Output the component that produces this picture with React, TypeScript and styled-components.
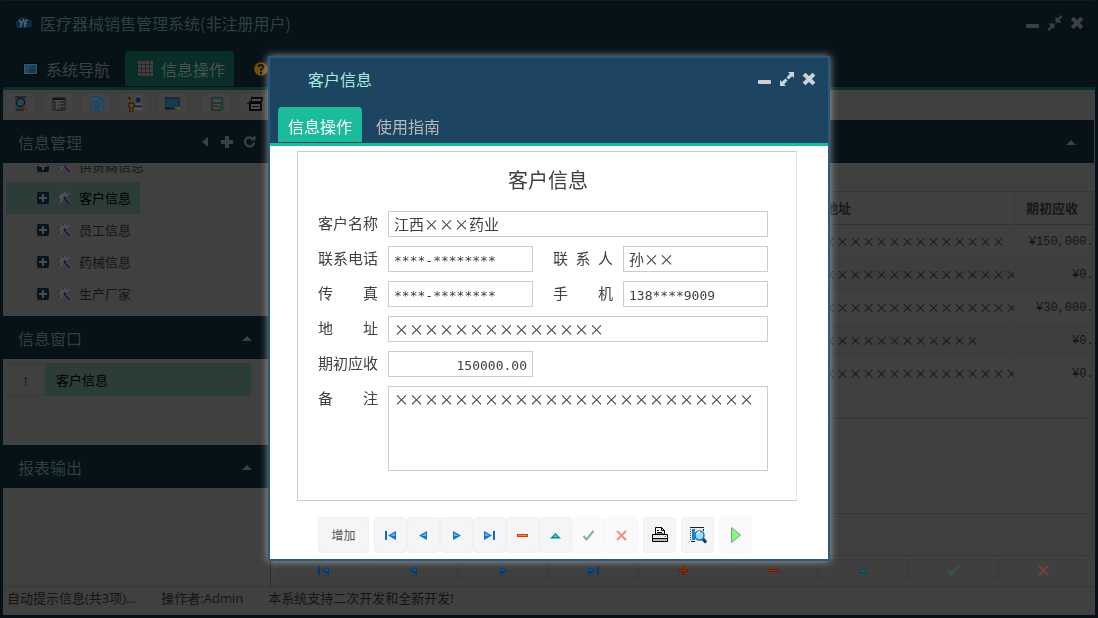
import React from "react";
import styled, { createGlobalStyle, css } from "styled-components";

const SANS = `"Open Sans", "Noto Sans CJK SC", sans-serif`;
const CJK = `"Noto Sans CJK SC", sans-serif`;
const MONO = `"DejaVu Sans Mono", "Noto Sans CJK SC", monospace`;
const MONO_SMALL = `"Liberation Mono", "Noto Sans CJK SC", monospace`;

const Global = createGlobalStyle`
  * { box-sizing: border-box; }
  body { margin: 0; background: #404040; font-family: ${SANS}; }
  button, input, textarea { font: inherit; margin: 0; }
  button { border: 0; background: none; padding: 0; color: inherit; }
  h1, h2, h3, ul { margin: 0; padding: 0; font-weight: 400; list-style: none; }
  svg { display: block; flex: none; }
`;

/* ---------- icons ---------- */

type Kind = "first" | "prev" | "next" | "last" | "plus" | "minus" | "up" | "check" | "cross";

const Pixel = styled.svg<{ $dim?: boolean }>`
  ${(p) => p.$dim && css`filter: saturate(1.5) brightness(0.48);`}
`;

function NavIcon({ kind, dim }: { kind: Kind; dim?: boolean }) {
  const left = (x: number) => (
    <>
      <path d={`M${x + 8} 2v9L${x} 6.5z`} fill="#1470e0" />
      <path d={`M${x + 7} 4v3H${x + 2}z`} fill="#58b4ff" />
    </>
  );
  const right = (x: number) => (
    <>
      <path d={`M${x} 2v9l8-4.5z`} fill="#1470e0" />
      <path d={`M${x + 1} 4v3h5z`} fill="#58b4ff" />
    </>
  );
  return (
    <Pixel $dim={dim} width="13" height="13" viewBox="0 0 13 13" aria-hidden="true">
      {kind === "first" && <><path d="M1 2h2v9H1z" fill="#1266c8" />{left(4)}</>}
      {kind === "prev" && left(2)}
      {kind === "next" && right(3)}
      {kind === "last" && <>{right(1)}<path d="M10 2h2v9h-2z" fill="#1266c8" /></>}
      {kind === "plus" && <><path d="M5 2h3v3h3v3H8v3H5V8H2V5h3z" fill="#d83c08" /><path d="M6 3h1v3h3v1H3V6h3z" fill="#ff8428" /></>}
      {kind === "minus" && <><path d="M1 5h11v3H1z" fill="#d83c08" /><path d="M2 6h9v1H2z" fill="#ff8c28" /></>}
      {kind === "up" && <><path d="M1 9.500h11L6.500 4z" fill="#0a8c98" /><path d="M4 8h5L6.500 5.500z" fill="#30d0dc" /></>}
      {kind === "check" && <path d="M1.500 7l3 3.500L11.500 2" fill="none" stroke="#7db792" strokeWidth="2" />}
      {kind === "cross" && <path d="M2 2l9 9M11 2l-9 9" fill="none" stroke="#ec908a" strokeWidth="2" />}
    </Pixel>
  );
}

const Minus = () => (
  <svg width="14" height="14" viewBox="0 0 14 14" aria-hidden="true">
    <rect x="0" y="8" width="13" height="4" rx="1" fill="currentColor" />
  </svg>
);
const Expand = () => (
  <svg width="16" height="16" viewBox="0 0 16 16" fill="currentColor" aria-hidden="true">
    <path d="M9 1h6v6l-1.800-1.800-3.700 3.300L7.500 6.500l3.300-3.700zM7 15H1V9l1.800 1.800 3.700-3.300L8.500 9.500l-3.300 3.700z" />
  </svg>
);
const Compress = () => (
  <svg width="16" height="16" viewBox="0 0 16 16" fill="currentColor" aria-hidden="true">
    <path d="M8.500 7.500v-6l2 2L14 0l1.500 1.500L12.200 5l2.300 2.500zM7.500 8.500v6l-2-2L2 16 .5 14.500 3.800 11 1.500 8.500z" />
  </svg>
);
const Times = () => (
  <svg width="14" height="14" viewBox="0 0 14 14" aria-hidden="true">
    <path d="M3.500 3.500l7 7M10.500 3.500l-7 7" stroke="currentColor" strokeWidth="4" strokeLinecap="square" />
  </svg>
);
const CaretUp = () => (
  <svg width="12" height="12" viewBox="0 0 12 12" aria-hidden="true"><path d="M1 9l5-5 5 5z" fill="currentColor" /></svg>
);
const CaretLeft = () => (
  <svg width="12" height="12" viewBox="0 0 12 12" aria-hidden="true"><path d="M9 1v10L3 6z" fill="currentColor" /></svg>
);
const PlusSign = () => (
  <svg width="12" height="12" viewBox="0 0 12 12" aria-hidden="true"><path d="M4 0h4v4h4v4H8v4H4V8H0V4h4z" fill="currentColor" /></svg>
);
const Refresh = () => (
  <svg width="13" height="13" viewBox="0 0 13 13" aria-hidden="true">
    <path d="M9.600 3.600A4.500 4.500 0 1 0 11 7.500" fill="none" stroke="currentColor" strokeWidth="2.200" />
    <path d="M12.500 0v5.500H7z" fill="currentColor" />
  </svg>
);
const Cloud = () => (
  <svg width="16" height="14" viewBox="0 0 16 14" aria-hidden="true">
    <path d="M3 12a3.500 3.500 0 0 1-1-7A5 5 0 0 1 11 3a4.500 4.500 0 0 1 2 9z" fill="#0c2a40" />
    <path d="M3 4l2.500 3.500M8 3L4 11M9 11V6q0-2 3-1.500M8 7.500h3" fill="none" stroke="#59606a" strokeWidth="1.600" />
  </svg>
);
const Screen = () => (
  <svg width="15" height="12" viewBox="0 0 15 12" aria-hidden="true">
    <path d="M0 0h15v12H0z" fill="#02060a" /><path d="M1 1h13v10H1z" fill="#46535a" /><path d="M2 2h11v8H2z" fill="#123c5c" /><path d="M2 2h7L4 10H2z" fill="#1d4a6b" />
  </svg>
);
const GridIcon = () => (
  <svg width="15" height="15" viewBox="0 0 15 15" aria-hidden="true">
    <path d="M0 0h15v15H0z" fill="#453f40" />
    <path d="M3.500 0v15M7.500 0v15M11.500 0v15M0 3.500h15M0 7.500h15M0 11.500h15" stroke="#262a28" />
  </svg>
);
const Help = () => (
  <svg width="16" height="16" viewBox="0 0 16 16" aria-hidden="true">
    <circle cx="8" cy="8" r="7" fill="#6f5212" stroke="#2d2208" />
    <path d="M5.500 6Q5.500 4 8 4t2.500 2Q10.500 7 8 8.500V10" fill="none" stroke="#12100a" strokeWidth="2" />
    <path d="M7 11h2v2H7z" fill="#12100a" />
  </svg>
);
const PlusBox = () => (
  <svg width="12" height="12" viewBox="0 0 12 12" aria-hidden="true">
    <rect width="12" height="12" rx="2" fill="#07141d" /><path d="M6 2v8M2 6h8" stroke="#484d50" strokeWidth="2" />
  </svg>
);
const Tool = () => (
  <svg width="14" height="14" viewBox="0 0 14 14" aria-hidden="true">
    <path d="M1 6l4-4 3-2 1 3 4-1-2 3-3 1-4 6-2-1 2-3z" fill="#505050" />
    <path d="M0 5l2 2M1 10l2-1M6 1l1 2M2 3l1 1" stroke="#2c2c2c" />
    <path d="M7 6l6 6.500" stroke="#2b0b3c" strokeWidth="2" /><path d="M9 7l5 5" stroke="#665a6c" />
  </svg>
);

function ToolbarIcon({ n }: { n: number }) {
  return (
    <svg width="16" height="16" viewBox="0 0 16 16" aria-hidden="true">
      {n === 0 && <><path d="M2 1h11v13H2z" fill="#343c42" /><path d="M2 1h11M3 14h8" stroke="#111" /><circle cx="7.500" cy="6.500" r="4" fill="#28485a" stroke="#101a20" strokeWidth="1.500" /><path d="M10 10l4 4" stroke="#632817" strokeWidth="3" /></>}
      {n === 1 && <><path d="M2 2h12v12H2z" fill="#4a4a4a" stroke="#161616" /><path d="M2 3h12" stroke="#161616" strokeWidth="2" /><path d="M4 5v8" stroke="#203443" strokeWidth="2" /><path d="M7 6h1M7 9h1M7 12h1M9 6h4M9 9h4M9 12h4" stroke="#111" /></>}
      {n === 2 && <><path d="M3 1h8l3 3v11H3z" fill="#2d5068" stroke="#19405c" /><path d="M11 1v3h3M5 5h5M5 7h7M5 9h7M5 11h7M5 13h5" fill="none" stroke="#1a3a50" /></>}
      {n === 3 && <><circle cx="4" cy="4" r="2" fill="#644516" /><path d="M2 7h5v4H6v5H3v-5H2z" fill="#644516" stroke="#1c1406" /><path d="M8 1h6v6H8z" fill="#101d48" stroke="#565656" /><path d="M8 8h7v2H8zM7 12h8v2H7z" fill="#555" /><path d="M1 2h2v2M7 10h8" fill="none" stroke="#111" /></>}
      {n === 4 && <><path d="M0 2h14v10H0z" fill="#163c50" stroke="#11151a" /><path d="M0 13h9" stroke="#111" /><circle cx="12" cy="11" r="3.500" fill="#1b2866" /><path d="M12 7.500v7a3.500 3.500 0 0 1-3-3z" fill="#1d5133" /><path d="M12 11h3.500a3.500 3.500 0 0 1-3.500 3.500z" fill="#6b5717" /></>}
      {n === 5 && <><path d="M3 2h10v12H3z" fill="#4b4b4b" stroke="#171717" /><path d="M3 3h10" stroke="#17435b" strokeWidth="2" /><path d="M4 7h8M4 10h5" stroke="#171717" /><path d="M12 8v6M9 11h6" stroke="#164d20" strokeWidth="2" /></>}
      {n === 6 && <><path d="M4 1h12v4H4z" fill="#080808" /><path d="M5 3h9v2H5z" fill="#4d4d4d" /><path d="M2 5h13v10H2z" fill="#080808" /><path d="M4 8h9v5H4z" fill="#4d4d4d" /><path d="M5 10.500h7M0 7.500h3" stroke="#111" /></>}
    </svg>
  );
}
const Printer = () => (
  <svg width="18" height="18" viewBox="0 0 18 18" aria-hidden="true">
    <path d="M4.500 8V1.500h6l3 3V8z" fill="#fff" stroke="#000" />
    <path d="M6 4.500h2M6 6.500h5M10.500 1v3.500h3" fill="none" stroke="#000" />
    <path d="M1.500 8.500h15v7h-15z" fill="#fff" stroke="#000" />
    <path d="M2 9.500h14M3 10.500h12" stroke="#d8c4c8" strokeDasharray="1 1" />
    <path d="M1.500 12.500h15v3h-15z" fill="#b8b8c0" stroke="#000" /><path d="M14 10.500h1" stroke="#d02030" />
  </svg>
);
const Preview = () => (
  <svg width="18" height="18" viewBox="0 0 18 18" aria-hidden="true">
    <path d="M1 1h14v14H1z" fill="#e8e8e8" /><path d="M1 1.500h14M2 15.500h4M14.500 3v2" stroke="#222" />
    <path d="M3 3h3v11H3z" fill="#1682d8" /><path d="M1.500 3v11" stroke="#555" strokeDasharray="1 1" />
    <circle cx="10.500" cy="9.500" r="4.500" fill="#9adcff" stroke="#1878c0" strokeWidth="1.500" />
    <path d="M8 8q1-2 3-2" stroke="#fff" strokeWidth="2" fill="none" /><path d="M14 13l3 3.500" stroke="#173858" strokeWidth="3" />
  </svg>
);
const Play = () => (
  <svg width="12" height="18" viewBox="0 0 12 18" aria-hidden="true">
    <path d="M1.500 1.500v15L10.500 9z" fill="#7cff7c" stroke="#8a948a" />
  </svg>
);

/* ---------- main window ---------- */

const Shell = styled.div`
  min-height: 100vh;
  display: flex;
  flex-direction: column;
  background: #404040;
  border: solid #071118;
  border-width: 0 3px 3px;
  color: #151515;
  font-size: 13px;
`;
const Banner = styled.header`
  background: #071118;
  border-top: 1px solid #0e1c25;
  border-bottom: 3px solid #092f28;
`;
const TitleBar = styled.div`
  height: 50px;
  padding: 0 11px 6px 13px;
  display: flex;
  align-items: center;
  gap: 8px;
`;
const AppTitle = styled.h1`
  flex: 1;
  font: 16px/24px ${CJK};
  color: #2b413e;
`;
const WindowButtons = styled.div<{ $bright?: boolean }>`
  display: flex;
  align-items: center;
  gap: 7px;
  color: ${(p) => (p.$bright ? "#cbd3d9" : "#3b4043")};
`;
const TopTabs = styled.nav`
  height: 36px;
  display: flex;
  padding-left: 7px;
`;
const TopTab = styled.button<{ $active?: boolean }>`
  display: flex;
  align-items: center;
  gap: 8px;
  padding: 0 9px 0 13px;
  height: 35px;
  margin-right: 6px;
  border-radius: 4px 4px 0 0;
  font: 16px/24px ${CJK};
  color: ${(p) => (p.$active ? "#47534f" : "#3a4247")};
  background: ${(p) => (p.$active ? "#082e27" : "transparent")};
`;
const Toolbar = styled.div`
  height: 30px;
  display: flex;
  align-items: center;
  gap: 13px;
  padding: 0 2px 3px;
`;
const ToolGroup = styled.div`
  display: flex;
  gap: 7px;
`;
const ToolButton = styled.button`
  width: 31px;
  height: 24px;
  display: grid;
  place-items: center;
  border: 1px solid #3d3d3d;
  border-radius: 4px;
  background: #424242;
`;
const Workspace = styled.div`
  flex: 1;
  display: grid;
  grid-template-columns: 267px minmax(0, 1fr);
`;
const Sidebar = styled.aside`
  display: flex;
  flex-direction: column;
`;
const PanelHead = styled.div`
  height: 43px;
  display: flex;
  align-items: center;
  gap: 10px;
  padding: 0 14px 0 15px;
  background: #071118;
  color: #3b4043;
`;
const FoldButton = styled.button`
  margin-right: 3px;
`;
const PanelTitle = styled.h2`
  flex: 1;
  font: 16px/24px ${CJK};
  color: #2b413e;
`;
const Tree = styled.ul`
  height: 153px;
  overflow: hidden;
  display: flex;
  flex-direction: column;
  justify-content: flex-end;
  border-top: 3px solid #404040;
  padding: 0 3px 6px;
`;
const TreeItem = styled.li<{ $active?: boolean }>`
  flex: none;
  height: 32px;
  width: 134px;
  white-space: nowrap;
  display: flex;
  align-items: center;
  gap: 8px;
  padding-left: 31px;
  font-family: ${CJK};
  background: ${(p) => (p.$active ? "#2c3c38" : "transparent")};
  color: ${(p) => (p.$active ? "#000" : "#151515")};
`;
const TreeLabel = styled.span`
  line-height: 20px;
`;
const OpenWindows = styled.ul`
  height: 86px;
  padding: 4px 19px 0 3px;
`;
const OpenWindow = styled.li`
  display: flex;
  height: 33px;
  align-items: stretch;
  line-height: 34px;
  color: #000;
  font-family: ${CJK};
`;
const RowNumber = styled.span`
  width: 39px;
  text-align: center;
  color: #1e1e1e;
  border: solid #2f3d3a;
  border-width: 1px 0;
  font-family: ${SANS};
`;
const RowName = styled.span`
  flex: 1;
  padding-left: 11px;
  background: #2c3c38;
`;
const Main = styled.main`
  min-width: 0;
  display: flex;
  flex-direction: column;
  padding-right: 1px;
  border-left: 1px solid #2c2c2c;
`;
const GridArea = styled.div`
  flex: 1;
  margin-top: 28px;
  margin-right: 1px;
  overflow: hidden;
  border: solid #363636;
  border-width: 1px 1px 1px 0;
`;
const Table = styled.table`
  width: calc(100% + 17px);
  table-layout: fixed;
  border-collapse: collapse;
  font-family: ${CJK};
  font-size: 13px;
`;
const Th = styled.th<{ $w?: number; $left?: boolean }>`
  width: ${(p) => (p.$w ? `${p.$w}px` : "auto")};
  height: 32px;
  padding: 0 11px;
  text-align: ${(p) => (p.$left ? "left" : "center")};
  border-right: 1px solid #3a3a3a;
  border-bottom: 1px solid #333;
  color: #181818;
`;
const Td = styled.td<{ $num?: boolean }>`
  height: 33px;
  padding: ${(p) => (p.$num ? "2px 0 0" : "0 5px")};
  overflow: hidden;
  white-space: nowrap;
  border-right: 1px solid #3c3c3c;
  border-bottom: 1px solid #3c3c3c;
  text-align: ${(p) => (p.$num ? "right" : "left")};
  font-family: ${(p) => (p.$num ? MONO_SMALL : CJK)};
  font-size: ${(p) => (p.$num ? "12px" : "13px")};
`;
const Row = styled.tr`
  &:nth-child(even) { background: #3e3e3e; }
`;
const Detail = styled.div<{ $h: number }>`
  height: ${(p) => p.$h}px;
  margin-right: 1px;
  border-right: 1px solid #363636;
  border-bottom: 1px solid #373737;
`;
const RecordBar = styled.div`
  height: 30px;
  display: flex;
  padding: 3px 6px 5px 7px;
`;
const RecordButton = styled.button`
  flex: 1;
  display: grid;
  place-items: center;
  border: 1px solid #3c3c3c;
  border-radius: 4px;
  background: #3f3f3f;
`;
const Status = styled.footer`
  height: 29px;
  display: flex;
  align-items: center;
  gap: 25px;
  padding: 0 4px 6px;
  border-top: 1px solid #383838;
  line-height: 20px;
  color: #141414;
`;

/* ---------- customer dialog ---------- */

const Layer = styled.div`
  position: fixed;
  inset: 0;
  display: grid;
  place-items: center;
  padding-bottom: 1px;
`;
const Dialog = styled.section`
  width: 562px;
  max-width: 100%;
  background: #fff;
  border: 2px solid #285a80;
  box-shadow: 0 0 8px rgba(255, 255, 255, 0.55);
  color: #404040;
`;
const DialogTop = styled.header`
  background: #1d4461;
  border-bottom: 3px solid #1abc9c;
`;
const DialogTitleBar = styled.div`
  height: 49px;
  display: flex;
  align-items: center;
  padding: 0 12px 7px 38px;
`;
const DialogTitle = styled.h2`
  flex: 1;
  font: 16px/24px ${CJK};
  color: #a5ecdc;
`;
const DialogTabs = styled.div`
  display: flex;
  height: 36px;
  padding-left: 8px;
  gap: 4px;
`;
const DialogTab = styled.button<{ $active?: boolean }>`
  height: 35px;
  padding: 2px 10px 0;
  border-radius: 4px 4px 0 0;
  font: 16px/24px ${CJK};
  color: ${(p) => (p.$active ? "#fff" : "#b4b9be")};
  background: ${(p) => (p.$active ? "#1abc9c" : "transparent")};
`;
const Form = styled.form`
  margin: 5px 31px 0 27px;
  height: 350px;
  padding: 12px 28px 0 20px;
  border: solid #ccc;
  border-width: 1px;
  border-right-color: #e4e4e4;
  font: 15px/24px ${CJK};
`;
const FormTitle = styled.h3`
  height: 47px;
  padding-left: 10px;
  font-size: 20px;
  line-height: 32px;
  text-align: center;
`;
const FieldRow = styled.div`
  display: flex;
  align-items: flex-start;
  margin-bottom: 9px;
`;
const Label = styled.label<{ $second?: boolean }>`
  width: 60px;
  margin-left: ${(p) => (p.$second ? "20px" : "0")};
  margin-right: 10px;
  text-align: justify;
  text-align-last: justify;
`;
const box = css`
  min-width: 0;
  padding: 0 5px;
  border: 1px solid #ccc;
  border-radius: 0;
  background: #fff;
  color: #404040;
  outline: 0;
`;
const Field = styled.input<{ $wide?: boolean; $mono?: boolean; $right?: boolean }>`
  ${box}
  height: 26px;
  width: 145px;
  ${(p) => p.$wide && css`flex: 1;`}
  padding-top: ${(p) => (p.$mono ? "2px" : "0")};
  padding-bottom: ${(p) => (p.$mono ? "0" : "2px")};
  font-family: ${(p) => (p.$mono ? MONO : CJK)};
  font-size: ${(p) => (p.$mono ? "13px" : "15px")};
  text-align: ${(p) => (p.$right ? "right" : "left")};
`;
const Area = styled.textarea`
  ${box}
  flex: 1;
  height: 85px;
  resize: none;
  font-family: ${CJK};
`;
const Actions = styled.div`
  display: flex;
  gap: 5px;
  padding: 16px 0 6px 48px;
`;
const Group = styled.div`
  display: flex;
`;
const Action = styled.button<{ $text?: boolean; $off?: boolean }>`
  width: ${(p) => (p.$text ? "51px" : "33px")};
  height: 36px;
  display: grid;
  place-items: center;
  border: 1px solid ${(p) => (p.$off ? "#f7f7f7" : "#f0f0f0")};
  border-radius: 4px;
  background: ${(p) => (p.$off ? "#fafafa" : "#f5f5f5")};
  color: #555;
  font: 12px/20px ${CJK};
`;

const toolGroups = [["查询", "列表", "单据", "人员", "统计"], ["新增", "打印"]];
const tree = ["供货商信息", "客户信息", "员工信息", "药械信息", "生产厂家"];
const rows: [number, string][] = [
  [26, "¥150,000.00"],
  [28, "¥0.00"],
  [28, "¥30,000.00"],
  [24, "¥0.00"],
  [28, "¥0.00"],
];
const records: [Kind, string][] = [
  ["first", "首条"], ["prev", "上一条"], ["next", "下一条"], ["last", "末条"],
  ["plus", "插入"], ["minus", "删除"], ["up", "编辑"], ["check", "保存"], ["cross", "取消"],
];

function CustomerDialog() {
  return (
    <Layer>
      <Dialog role="dialog" aria-labelledby="dialog-title">
        <DialogTop>
          <DialogTitleBar>
            <DialogTitle id="dialog-title">客户信息</DialogTitle>
            <WindowButtons $bright>
              <button aria-label="最小化"><Minus /></button>
              <button aria-label="最大化"><Expand /></button>
              <button aria-label="关闭"><Times /></button>
            </WindowButtons>
          </DialogTitleBar>
          <DialogTabs>
            <DialogTab $active>信息操作</DialogTab>
            <DialogTab>使用指南</DialogTab>
          </DialogTabs>
        </DialogTop>
        <Form>
          <FormTitle>客户信息</FormTitle>
          <FieldRow>
            <Label htmlFor="name">客户名称</Label>
            <Field id="name" $wide defaultValue="江西×××药业" />
          </FieldRow>
          <FieldRow>
            <Label htmlFor="phone">联系电话</Label>
            <Field id="phone" $mono defaultValue="****-********" />
            <Label htmlFor="contact" $second>联 系 人</Label>
            <Field id="contact" defaultValue="孙××" />
          </FieldRow>
          <FieldRow>
            <Label htmlFor="fax">传 真</Label>
            <Field id="fax" $mono defaultValue="****-********" />
            <Label htmlFor="mobile" $second>手 机</Label>
            <Field id="mobile" $mono defaultValue="138****9009" />
          </FieldRow>
          <FieldRow>
            <Label htmlFor="address">地 址</Label>
            <Field id="address" $wide defaultValue={"×".repeat(14)} />
          </FieldRow>
          <FieldRow>
            <Label htmlFor="opening">期初应收</Label>
            <Field id="opening" $mono $right defaultValue="150000.00" />
          </FieldRow>
          <FieldRow>
            <Label htmlFor="remark">备 注</Label>
            <Area id="remark" defaultValue={"×".repeat(24)} />
          </FieldRow>
        </Form>
        <Actions>
          <Action $text>增加</Action>
          <Group>
            {records.filter(([k]) => k !== "plus").map(([k, name]) => (
              <Action key={k} aria-label={name} $off={k === "check" || k === "cross"}>
                <NavIcon kind={k} />
              </Action>
            ))}
          </Group>
          <Action aria-label="打印"><Printer /></Action>
          <Action aria-label="预览"><Preview /></Action>
          <Action aria-label="运行" $off><Play /></Action>
        </Actions>
      </Dialog>
    </Layer>
  );
}

export default function App() {
  return (
    <>
      <Global />
      <Shell>
        <Banner>
          <TitleBar>
            <Cloud />
            <AppTitle>医疗器械销售管理系统(非注册用户)</AppTitle>
            <WindowButtons>
              <button aria-label="最小化"><Minus /></button>
              <button aria-label="还原"><Compress /></button>
              <button aria-label="关闭"><Times /></button>
            </WindowButtons>
          </TitleBar>
          <TopTabs>
            <TopTab><Screen />系统导航</TopTab>
            <TopTab $active><GridIcon />信息操作</TopTab>
            <TopTab aria-label="帮助"><Help /></TopTab>
          </TopTabs>
        </Banner>
        <Toolbar>
          {toolGroups.map((group, g) => (
            <ToolGroup key={g}>
              {group.map((name, i) => (
                <ToolButton key={name} aria-label={name}><ToolbarIcon n={g * 5 + i} /></ToolButton>
              ))}
            </ToolGroup>
          ))}
        </Toolbar>
        <Workspace>
          <Sidebar>
            <PanelHead>
              <PanelTitle>信息管理</PanelTitle>
              <button aria-label="收起"><CaretLeft /></button>
              <button aria-label="展开"><PlusSign /></button>
              <button aria-label="刷新"><Refresh /></button>
            </PanelHead>
            <Tree>
              {tree.map((name) => (
                <TreeItem key={name} $active={name === "客户信息"}>
                  <PlusBox /><Tool /><TreeLabel>{name}</TreeLabel>
                </TreeItem>
              ))}
            </Tree>
            <PanelHead>
              <PanelTitle>信息窗口</PanelTitle>
              <FoldButton aria-label="折叠"><CaretUp /></FoldButton>
            </PanelHead>
            <OpenWindows>
              <OpenWindow><RowNumber>1</RowNumber><RowName>客户信息</RowName></OpenWindow>
            </OpenWindows>
            <PanelHead>
              <PanelTitle>报表输出</PanelTitle>
              <FoldButton aria-label="折叠"><CaretUp /></FoldButton>
            </PanelHead>
          </Sidebar>
          <Main>
            <PanelHead>
              <PanelTitle />
              <FoldButton aria-label="折叠"><CaretUp /></FoldButton>
            </PanelHead>
            <GridArea>
              <Table>
                <thead>
                  <tr><Th /><Th $w={353}>地址</Th><Th $w={94} $left>期初应收</Th></tr>
                </thead>
                <tbody>
                  {rows.map(([n, amount], i) => (
                    <Row key={i}><Td /><Td>{"×".repeat(n)}</Td><Td $num>{amount}</Td></Row>
                  ))}
                </tbody>
              </Table>
            </GridArea>
            <Detail $h={95} />
            <Detail $h={42} />
            <RecordBar>
              {records.map(([k, name]) => (
                <RecordButton key={k} aria-label={name}><NavIcon kind={k} dim /></RecordButton>
              ))}
            </RecordBar>
          </Main>
        </Workspace>
        <Status>
          <span>自动提示信息(共3项)...</span>
          <span>操作者:Admin</span>
          <span>本系统支持二次开发和全新开发!</span>
        </Status>
      </Shell>
      <CustomerDialog />
    </>
  );
}
